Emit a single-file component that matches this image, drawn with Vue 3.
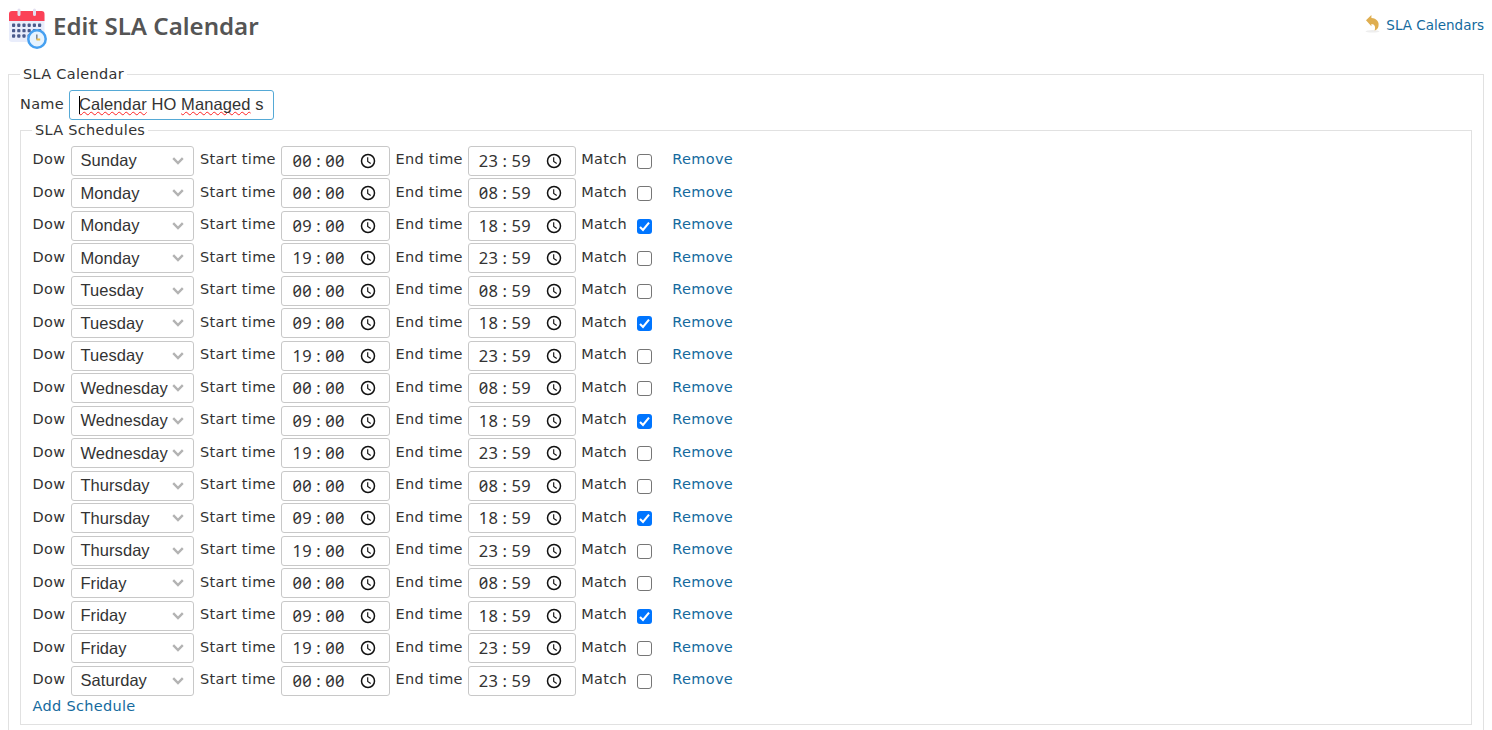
<script setup>
const plan = [['Sunday', '00:00', '23:59', false]]
for (const day of ['Monday', 'Tuesday', 'Wednesday', 'Thursday', 'Friday']) {
  plan.push([day, '00:00', '08:59', false], [day, '09:00', '18:59', true], [day, '19:00', '23:59', false])
}
plan.push(['Saturday', '00:00', '23:59', false])
const rows = plan.map(([day, start, end, match]) => ({ day, times: [start, end], match }))
const dots = [0, 1, 2].flatMap(r => [0, 1, 2, 3, 4, 5].map(c => ({ x: 12 + c * 5.2, y: 23.5 + r * 5.4 })))
</script>

<template>
  <div class="page">
    <header>
      <svg class="logo" width="40" height="42" viewBox="8 8 40 42">
        <rect x="9" y="13" width="35.500" height="29" rx="3" fill="#e9edfb" />
        <path d="M9 21v-7q0-3 3-3h29.500q3 0 3 3v7z" fill="#fb4157" />
        <path d="M19 10v4.500M34.500 10v4.500" stroke="#e3dff0" stroke-width="3" stroke-linecap="round" />
        <rect v-for="(d, i) in dots" :key="i" :x="d.x" :y="d.y" width="3.200" height="3.400" rx=".9" fill="#4a5a8c" />
        <circle cx="37" cy="39" r="8.700" fill="#e6f3ff" stroke="#46a0f0" stroke-width="2.500" />
        <path d="M36.800 34.500v5" stroke="#808894" stroke-width="1.600" fill="none" />
        <path d="M36.500 39.500h3.700" stroke="#eebe44" stroke-width="2" />
      </svg>
      <h1>Edit SLA Calendar</h1>
      <a class="back">
        <svg width="16" height="18" viewBox="0 0 16 18">
          <ellipse cx="7.500" cy="16.300" rx="7" ry="1.300" fill="#eeeeee" />
          <path d="M1 5.200 6.400 0v3c5.300.4 8.200 4 7 8.400-.5 2-1.700 3.400-3.800 4.200 1.300-4 .2-6.400-3.200-6.700v2.300z" fill="#dfae50" />
        </svg>
        <span>SLA Calendars</span>
      </a>
    </header>

    <section class="box outer">
      <span class="legend">SLA Calendar</span>
      <div class="name">
        <span>Name</span>
        <div class="input"><i class="caret"></i><span class="typo">Calendar</span> HO <span class="typo">Managed</span> s</div>
      </div>
      <section class="box inner">
        <span class="legend">SLA Schedules</span>
        <div v-for="(r, i) in rows" :key="i" class="row">
          <span class="lab dow">Dow</span>
          <div class="field select">
            <span>{{ r.day }}</span>
            <svg width="12" height="8" viewBox="0 0 12 8"><path d="M1.200 1.200 6 6l4.800-4.800" fill="none" stroke="#b3b3b3" stroke-width="2.400" /></svg>
          </div>
          <template v-for="(t, k) in r.times" :key="k">
            <span class="lab" :class="k ? 'end' : 'start'">{{ k ? 'End time' : 'Start time' }}</span>
            <div class="field time" :class="{ last: k }">
              <span class="digits"><b v-for="(c, n) in t" :key="n" :class="{ colon: c === ':' }">{{ c }}</b></span>
              <svg width="16" height="16" viewBox="0 0 16 16"><circle cx="8" cy="8" r="6.500" fill="none" stroke="#111" stroke-width="1.500" /><path d="M7.700 4.200v4.200l3 2" fill="none" stroke="#111" stroke-width="1.150" /></svg>
            </div>
          </template>
          <span class="lab match">Match</span>
          <span class="check" :class="{ on: r.match }">
            <svg v-if="r.match" width="15" height="15" viewBox="0 0 15 15"><path d="M3 7.900 6 10.900 12 3.700" fill="none" stroke="#fff" stroke-width="2.100" /></svg>
          </span>
          <a class="lab">Remove</a>
        </div>
        <a class="add">Add Schedule</a>
      </section>
    </section>
  </div>
</template>

<style scoped>
.page { height: 730px; overflow: hidden; padding: 8px 8px 0; box-sizing: border-box; background: #fff; color: #333; font: 14.500px/18px "DejaVu Sans", Verdana, sans-serif; white-space: nowrap; letter-spacing: .3px; }
header { display: flex; height: 66px; align-items: flex-start; }
.logo { display: block; }
h1 { margin: 0 0 0 5px; font: 600 24.100px/35px "Noto Sans", sans-serif; color: #555; letter-spacing: 0; }
a { color: #146a9e; }
.back { margin-left: auto; display: flex; font-size: 13.500px; line-height: 35px; letter-spacing: 0; }
.back svg { margin: 7px 5px 0 0; }
.box { position: relative; border: 1px solid #e1e1e1; box-sizing: border-box; }
.outer { height: 700px; padding: 15px 11px 0; }
.legend { position: absolute; top: -10px; left: 11px; padding: 0 3px; background: #fff; }
.name { display: flex; height: 30px; }
.name > span { width: 49px; line-height: 28px; }
.input { position: relative; width: 205px; height: 30px; box-sizing: border-box; border: 1px solid #55a9d6; border-radius: 3px; padding-left: 9px; font: 16.500px/27px "Liberation Sans", Arial, sans-serif; letter-spacing: .1px; }
.typo { text-decoration: underline wavy #f22 1.300px; text-underline-offset: 1px; text-decoration-skip-ink: none; }
.caret { position: absolute; left: 9px; top: 5px; width: 1px; height: 18px; background: #000; }
.inner { height: 595px; margin-top: 10px; padding: 14.750px 0 0 11.600px; }
.row { display: flex; height: 32.500px; }
.lab { line-height: 26px; flex-shrink: 0; margin-top: .3px; }
.dow { width: 38.400px; }
.field { display: flex; box-sizing: border-box; height: 30px; border: 1px solid #c8c8c8; border-radius: 3px; align-items: center; }
.select { width: 123px; padding: 0 8.500px; justify-content: space-between; font: 16.500px/27px "Liberation Sans", Arial, sans-serif; letter-spacing: .05px; }
.select svg { flex-shrink: 0; }
.start { width: 81px; padding-left: 6px; }
.end { width: 72.200px; padding-left: 5.500px; }
.time { width: 109px; padding: 0 13px 0 10.400px; justify-content: space-between; }
.last { width: 108px; padding-left: 10px; }
.digits { display: flex; font: 16.500px/28px "Noto Sans", sans-serif; font-feature-settings: "zero"; letter-spacing: 0; }
.digits b { width: 9.700px; text-align: center; font-weight: 400; }
.digits .colon { width: 13.400px; }
.match { width: 49px; padding-left: 5.500px; }
.check { width: 15px; height: 15px; margin: 8px 20.400px 0 6.800px; border: 1px solid #767676; border-radius: 3px; box-sizing: border-box; }
.check.on { background: #0075ff; border: 0; }
.check svg { display: block; }
.add { display: block; line-height: 18px; margin-top: -1.400px; }
</style>

<style>
body { background: #fff; }
</style>
